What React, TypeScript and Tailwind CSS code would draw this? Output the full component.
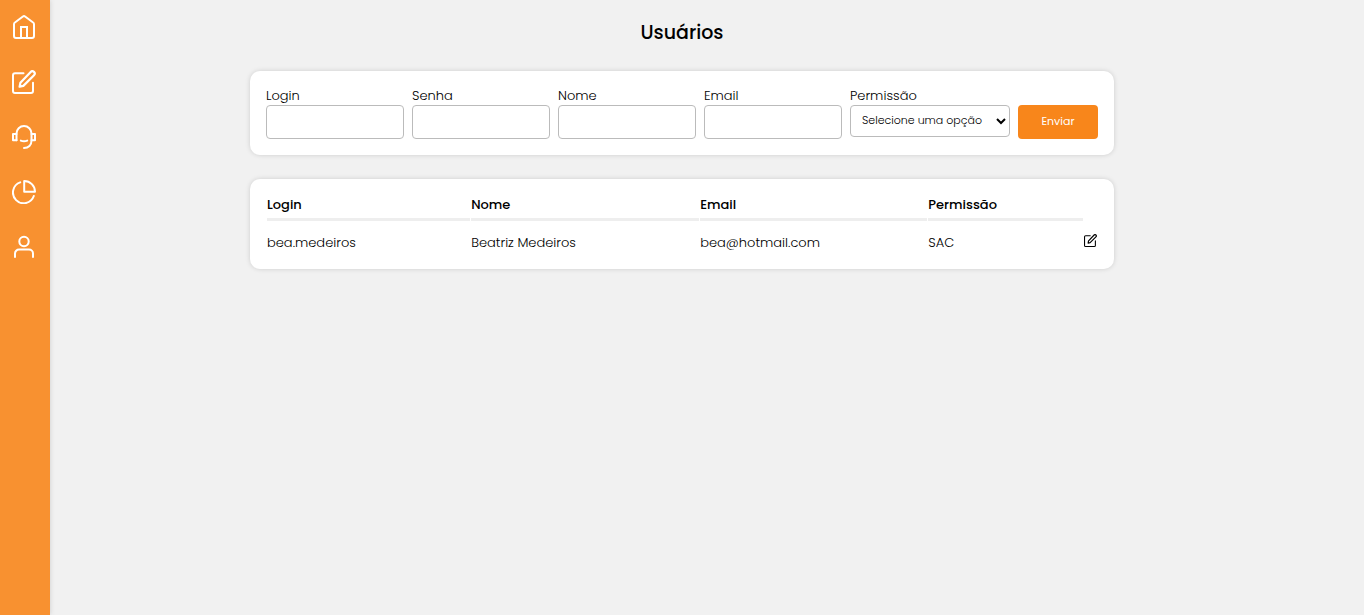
import { useState } from "react";
import type { ReactNode } from "react";

type IconProps = { className?: string };

function Icon({ className = "size-6", children }: IconProps & { children: ReactNode }) {
  return (
    <svg
      viewBox="0 0 24 24"
      className={className}
      fill="none"
      stroke="currentColor"
      strokeWidth="2"
      strokeLinecap="round"
      strokeLinejoin="round"
      aria-hidden="true"
    >
      {children}
    </svg>
  );
}

const HomeIcon = () => (
  <Icon>
    <path d="M2 9.2c0-.7.3-1.300.9-1.700l8-6c.7-.5 1.500-.5 2.200 0l8 6c.6.4.9 1 .9 1.700V21c0 1.100-.9 2-2 2H4c-1.100 0-2-.9-2-2Z" />
    <path d="M9 23V12h6v11" strokeLinejoin="miter" />
  </Icon>
);

const EditIcon = ({ className }: IconProps) => (
  <Icon className={className}>
    <path d="M11.500 3.300H3a2 2 0 0 0-2 2V21a2 2 0 0 0 2 2h16a2 2 0 0 0 2-2v-8.300" />
    <path
      d="M18.700 1.900a2.300 2.300 0 0 1 3.300 3.300L11.300 15.900 7.600 16.700l.8-3.900Z"
      strokeWidth="2.2"
    />
  </Icon>
);

const HeadsetIcon = () => (
  <Icon>
    <path d="M4.500 15.300V8.500a7.500 7.500 0 0 1 15 0v7c0 4.600-3 7.500-7.500 7.500" />
    <path d="M4.500 8.900H1v6.400h3.500M19.500 8.900H23v6.400h-3.500" />
    <path d="M8.800 15.600c2 .9 4.400.9 6.400 0" />
  </Icon>
);

const ChartIcon = () => (
  <Icon>
    <path d="M8.200 2.400A10.700 10.700 0 1 0 21.800 16" />
    <path d="M12.200 1v10.800H23C23 5.800 18.200 1 12.200 1Z" />
  </Icon>
);

const UserIcon = () => (
  <Icon>
    <circle cx="12" cy="6.500" r="4.700" />
    <path d="M3 22v-3.500a4 4 0 0 1 4-4h10a4 4 0 0 1 4 4V22" />
  </Icon>
);

const links = [
  { label: "Início", href: "#inicio", icon: <HomeIcon /> },
  { label: "Cadastro", href: "#cadastro", icon: <EditIcon /> },
  { label: "Atendimento", href: "#atendimento", icon: <HeadsetIcon /> },
  { label: "Relatórios", href: "#relatorios", icon: <ChartIcon /> },
  { label: "Usuários", href: "#usuarios", icon: <UserIcon /> },
];

const fields = [
  { id: "login", label: "Login", type: "text" },
  { id: "senha", label: "Senha", type: "password" },
  { id: "nome", label: "Nome", type: "text" },
  { id: "email", label: "Email", type: "email" },
];

const users = [
  { login: "bea.medeiros", nome: "Beatriz Medeiros", email: "bea@hotmail.com", permissao: "SAC" },
];

const cardClass = "rounded-[10px] bg-white p-4 shadow-[0_0_5px_rgba(0,0,0,0.15)]";
const headClass = "border-b-3 border-[#eeeeee] pb-1 text-left font-medium";

export default function App() {
  const [permissao, setPermissao] = useState("");

  return (
    <div className="flex min-h-screen bg-[#f1f1f1] font-['Poppins','Inter',sans-serif] text-[13px] leading-[18px] font-light text-black">
      <aside className="w-[50px] shrink-0 bg-[#f89130] shadow-[0_0_5px_rgba(0,0,0,0.15)]">
        <nav className="flex flex-col gap-[31px] py-[15px] pl-3 text-white">
          {links.map((link) => (
            <a key={link.href} href={link.href} aria-label={link.label} className="size-6">
              {link.icon}
            </a>
          ))}
        </nav>
      </aside>

      <main className="min-w-0 flex-1 pr-[50px]">
        <div className="mx-auto flex max-w-[864px] flex-col gap-6 pt-[19px]">
          <h1 className="text-center text-[19px] leading-7 font-medium">Usuários</h1>

          <form className={`flex items-end gap-2 ${cardClass}`} onSubmit={(e) => e.preventDefault()}>
            {fields.map((field) => (
              <div key={field.id} className="flex min-w-0 flex-1 flex-col">
                <label htmlFor={field.id}>{field.label}</label>
                <input
                  id={field.id}
                  type={field.type}
                  className="h-[34px] w-full rounded border border-[#bbbbbb] bg-white px-2"
                />
              </div>
            ))}
            <div className="flex w-40 flex-col self-start">
              <label htmlFor="permissao">Permissão</label>
              <select
                id="permissao"
                value={permissao}
                onChange={(e) => setPermissao(e.target.value)}
                className="h-8 w-full rounded border border-[#bbbbbb] bg-white pb-0.5 pl-[7px] text-[11px]"
              >
                <option value="">Selecione uma opção</option>
                <option value="SAC">SAC</option>
              </select>
            </div>
            <button type="submit" className="h-[34px] w-20 rounded bg-[#f8861b] pb-0.5 text-[11px] font-normal text-white">
              Enviar
            </button>
          </form>

          <section className={cardClass}>
            <table className="w-full table-fixed border-separate border-spacing-px">
              <colgroup>
                <col className="w-[24.6%]" />
                <col className="w-[27.6%]" />
                <col className="w-[27.5%]" />
                <col />
                <col className="w-[13px]" />
              </colgroup>
              <thead>
                <tr>
                  <th scope="col" className={headClass}>Login</th>
                  <th scope="col" className={headClass}>Nome</th>
                  <th scope="col" className={headClass}>Email</th>
                  <th scope="col" className={headClass}>Permissão</th>
                  <td />
                </tr>
              </thead>
              <tbody>
                {users.map((user) => (
                  <tr key={user.login}>
                    <td className="pt-3">{user.login}</td>
                    <td className="pt-3">{user.nome}</td>
                    <td className="pt-3">{user.email}</td>
                    <td className="pt-3">{user.permissao}</td>
                    <td className="pt-3 align-top">
                      <button type="button" aria-label="Editar usuário" className="block">
                        <EditIcon className="size-[13px]" />
                      </button>
                    </td>
                  </tr>
                ))}
              </tbody>
            </table>
          </section>
        </div>
      </main>
    </div>
  );
}
